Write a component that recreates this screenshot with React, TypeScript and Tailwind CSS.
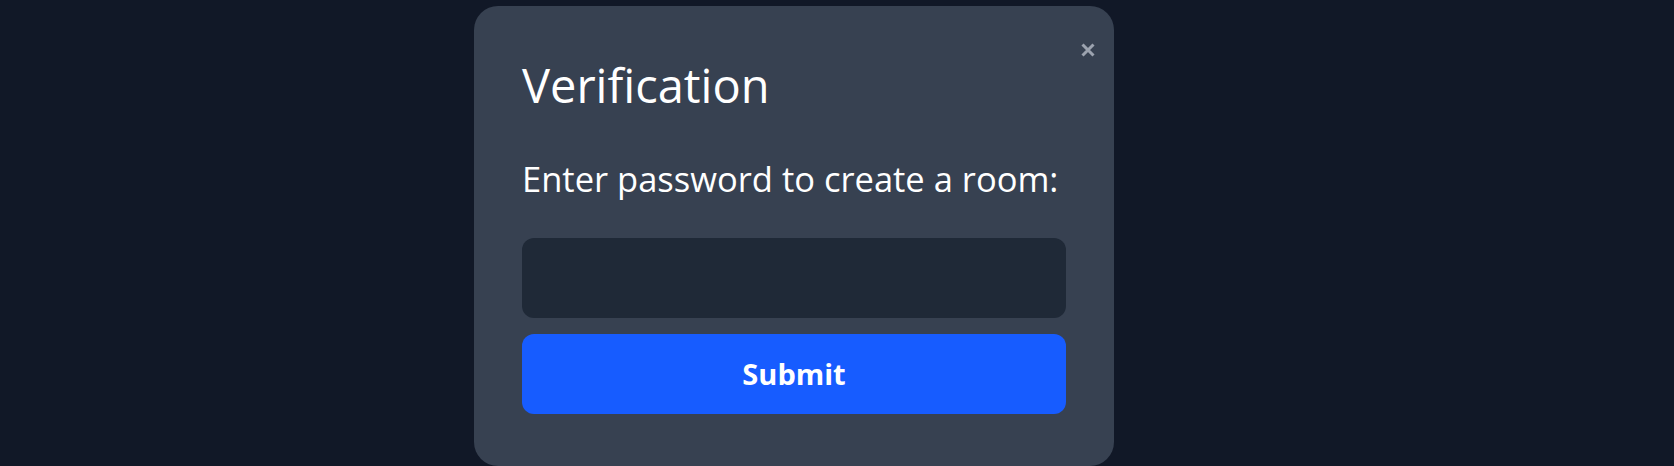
import { useState } from "react";

export default function App() {
  const [password, setPassword] = useState("");

  return (
    <div
      className="min-h-[466px] w-full bg-[#111827] flex justify-center pt-1.5 pr-[86px]"
      style={{ fontFamily: '"Open Sans", "Liberation Sans", sans-serif' }}
    >
      <div className="relative w-[640px] rounded-3xl bg-[#374151] px-12 pt-12 pb-12">
        <button
          type="button"
          aria-label="Close"
          className="absolute top-[36px] right-[18px] text-[#9ca3af]"
        >
          <svg width="16" height="16" viewBox="0 0 16 16">
            <path
              d="M2.5 2.5 L13.5 13.5 M13.5 2.5 L2.5 13.5"
              stroke="currentColor"
              strokeWidth="3"
            />
          </svg>
        </button>

        <h2 className="text-[47px] leading-[63px] text-white mb-[42px]">
          Verification
        </h2>
        <p className="text-[34.5px] leading-10 text-white mb-[39px]">
          Enter password to create a room:
        </p>

        <form
          className="flex flex-col gap-4"
          onSubmit={(e) => e.preventDefault()}
        >
          <input
            type="password"
            value={password}
            onChange={(e) => setPassword(e.target.value)}
            className="h-20 w-full rounded-xl bg-[#1f2937] px-5 text-2xl text-white outline-none"
          />
          <button
            type="submit"
            className="h-20 w-full rounded-xl bg-[#175cff] text-[29px] font-bold text-white"
          >
            Submit
          </button>
        </form>
      </div>
    </div>
  );
}
